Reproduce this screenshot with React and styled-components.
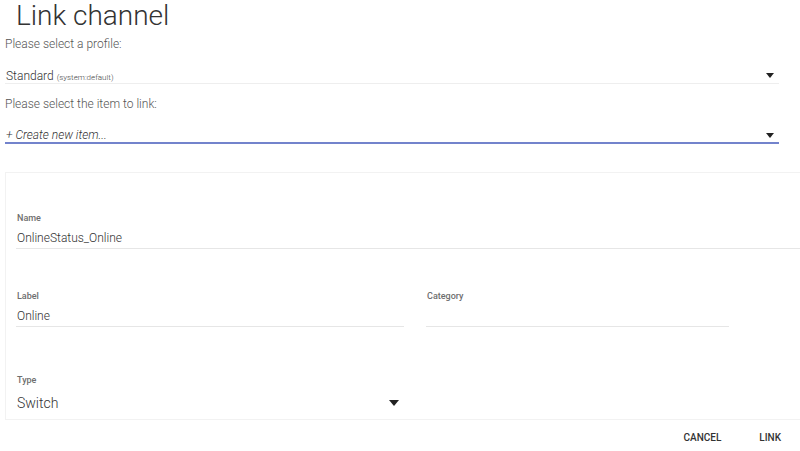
import React from 'react'
import styled, { createGlobalStyle } from 'styled-components'

const GlobalStyle = createGlobalStyle`
  html, body {
    margin: 0;
    padding: 0;
    background: #fff;
    font-family: Roboto, "Liberation Sans", sans-serif;
    color: #333;
  }
`

const Caret = ({ size = 8 }) => (
  <svg width={size} height={size / 2 + 1} viewBox="0 0 10 6">
    <path d="M0 0 H10 L5 6 Z" fill="#222" />
  </svg>
)

const App = () => {
  return (
    <Page>
      <GlobalStyle />
      <Title>Link channel</Title>

      <Hint>Please select a profile:</Hint>
      <Select>
        <span>
          Standard <Small>(system:default)</Small>
        </span>
        <Caret />
      </Select>

      <Hint>Please select the item to link:</Hint>
      <Select $active>
        <Italic>+ Create new item...</Italic>
        <Caret />
      </Select>

      <Card>
        <Field $top={39}>
          <FieldLabel>Name</FieldLabel>
          <FieldInput>OnlineStatus_Online</FieldInput>
        </Field>

        <Row>
          <Field $top={41} $width={388}>
            <FieldLabel>Label</FieldLabel>
            <FieldInput>Online</FieldInput>
          </Field>
          <Field $top={41} $width={303}>
            <FieldLabel>Category</FieldLabel>
            <FieldInput />
          </Field>
        </Row>

        <Field $top={47} $width={388}>
          <FieldLabel>Type</FieldLabel>
          <TypeSelect>
            <span>Switch</span>
            <Caret size={10} />
          </TypeSelect>
        </Field>
      </Card>

      <Actions>
        <TextButton>Cancel</TextButton>
        <TextButton>Link</TextButton>
      </Actions>
    </Page>
  )
}

export default App

const Page = styled.div`
  width: 800px;
  height: 451px;
  overflow: hidden;
  box-sizing: border-box;
  padding-left: 5px;
  display: flex;
  flex-direction: column;
`

const Title = styled.h1`
  margin: 0;
  padding-left: 11px;
  font-size: 28px;
  font-weight: 300;
  line-height: 32px;
  color: #333;
`

const Hint = styled.div`
  margin-top: 5px;
  font-size: 12px;
  font-weight: 300;
  line-height: 14px;
  color: #555;
`

const Select = styled.div`
  width: 774px;
  height: 19px;
  margin-top: 14px;
  margin-bottom: 8px;
  box-sizing: border-box;
  display: flex;
  align-items: center;
  justify-content: space-between;
  padding: 3px 5px 0 1px;
  font-size: 12px;
  font-weight: 300;
  color: #333;
  border-bottom: ${p => (p.$active ? '2px solid #7383cc' : '1px solid #eee')};
`

const Small = styled.span`
  font-size: 8px;
  color: #444;
`

const Italic = styled.span`
  font-style: italic;
  color: #333;
`

const Card = styled.div`
  flex: none;
  margin-top: 20px;
  height: 248px;
  box-sizing: border-box;
  border: 1px solid #f2f2f2;
  border-right: none;
  padding-left: 10px;
  overflow: hidden;
`

const Row = styled.div`
  display: flex;
  gap: 22px;
`

const Field = styled.div`
  margin-top: ${p => p.$top}px;
  width: ${p => (p.$width ? `${p.$width}px` : 'auto')};
  display: flex;
  flex-direction: column;
`

const FieldLabel = styled.div`
  font-size: 9px;
  line-height: 12px;
  font-weight: 500;
  color: #6e6e6e;
  padding-left: 1px;
`

const FieldInput = styled.div`
  height: 20px;
  margin-top: 5px;
  box-sizing: border-box;
  padding-left: 1px;
  font-size: 12px;
  font-weight: 300;
  line-height: 19px;
  color: #333;
  border-bottom: 1px solid #e6e6e6;
`

const TypeSelect = styled.div`
  height: 28px;
  margin-top: 3px;
  display: flex;
  align-items: center;
  justify-content: space-between;
  padding: 0 5px 0 1px;
  font-size: 14px;
  font-weight: 300;
  color: #333;
`

const Actions = styled.div`
  display: flex;
  justify-content: flex-end;
  gap: 38px;
  padding: 11px 19px 0 0;
`

const TextButton = styled.button`
  border: none;
  background: none;
  padding: 0;
  font-family: Roboto, "Liberation Sans", sans-serif;
  font-size: 10px;
  font-weight: 500;
  line-height: 14px;
  text-transform: uppercase;
  color: #333;
  cursor: pointer;
`
